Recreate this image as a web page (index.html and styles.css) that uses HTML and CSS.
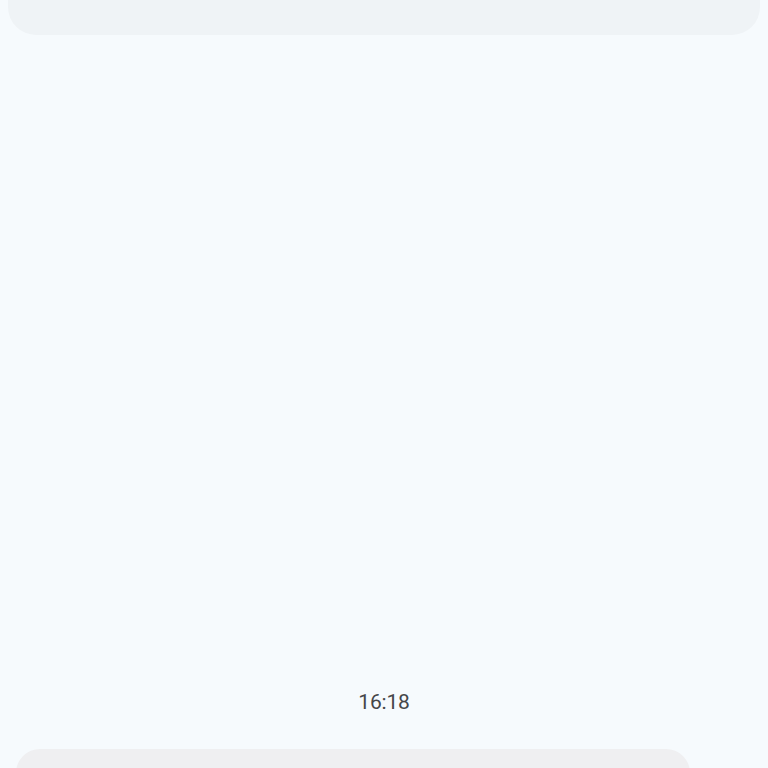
FILE: index.html
```html
<!DOCTYPE html>
<html>
<head>
<meta charset="utf-8">
<link rel="stylesheet" href="styles.css">
</head>
<body>
<div class="page">
  <div class="top-card"></div>
  <div class="spacer"></div>
  <div class="time">16:18</div>
  <div class="bubble-row">
    <div class="bubble"></div>
  </div>
</div>
</body>
</html>
```

FILE: styles.css
```css
html, body {
  margin: 0;
  padding: 0;
  height: 100%;
  background: #f6fafd;
  font-family: Roboto, "Open Sans", "Liberation Sans", sans-serif;
}
.page {
  display: flex;
  flex-direction: column;
  height: 768px;
  overflow: hidden;
}
.top-card {
  margin: -40px 8px 0 8px;
  height: 75px;
  background: #eff3f6;
  border-radius: 0 0 28px 28px;
  flex: none;
}
.spacer {
  flex: 1;
}
.time {
  text-align: center;
  font-size: 21px;
  color: #454649;
  line-height: 26px;
  margin-bottom: 34px;
  letter-spacing: -0.2px;
}
.bubble-row {
  padding: 0 78px 0 16px;
  flex: none;
}
.bubble {
  height: 40px;
  margin-bottom: -21px;
  background: #efeff1;
  border-radius: 24px 24px 0 0;
}
```
